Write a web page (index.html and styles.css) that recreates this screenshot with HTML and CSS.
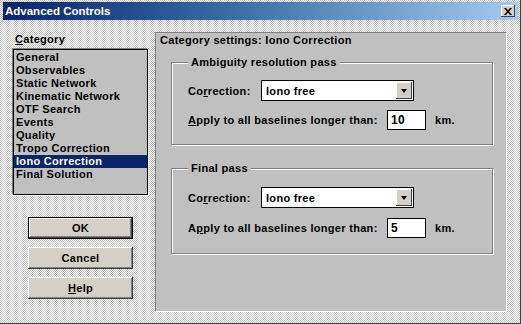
FILE: index.html
```html
<!DOCTYPE html>
<html lang="en">
<head>
  <meta charset="UTF-8" />
  <title>Advanced Controls</title>
  <link rel="stylesheet" href="styles.css">
</head>
<body>
  <div class="window">
    <div class="titlebar">
      <span class="title">Advanced Controls</span>
      <span class="close">
        <svg width="8" height="7" viewBox="0 0 8 7"><path d="M0 0h2l2 2.5L6 0h2L5 3.5 8 7H6L4 4.5 2 7H0l3-3.5z" fill="#000"/></svg>
      </span>
    </div>

    <div class="main">
      <div class="sidebar">
        <div class="cat-label"><u>C</u>ategory</div>
        <ul class="listbox">
          <li>General</li>
          <li>Observables</li>
          <li>Static Network</li>
          <li>Kinematic Network</li>
          <li>OTF Search</li>
          <li>Events</li>
          <li>Quality</li>
          <li>Tropo Correction</li>
          <li class="selected">Iono Correction</li>
          <li>Final Solution</li>
        </ul>
        <div class="buttons">
          <button class="btn default">OK</button>
          <button class="btn">Cancel</button>
          <button class="btn"><u>H</u>elp</button>
        </div>
      </div>

      <div class="panel">
        <div class="panel-title">Category settings: Iono Correction</div>

        <div class="group first">
          <span class="group-title">Ambiguity resolution pass</span>
          <div class="row">
            <span class="label short">Co<u>r</u>rection:</span>
            <div class="combo">
              <span class="combo-value">Iono free</span>
              <span class="combo-btn"><span class="arrow"></span></span>
            </div>
          </div>
          <div class="row">
            <span class="label long"><u>A</u>pply to all baselines longer than:</span>
            <div class="field">10</div>
            <span class="unit">km.</span>
          </div>
        </div>

        <div class="group second">
          <span class="group-title">Final pass</span>
          <div class="row">
            <span class="label short">Co<u>r</u>rection:</span>
            <div class="combo">
              <span class="combo-value">Iono free</span>
              <span class="combo-btn"><span class="arrow"></span></span>
            </div>
          </div>
          <div class="row">
            <span class="label long">A<u>p</u>ply to all baselines longer than:</span>
            <div class="field">5</div>
            <span class="unit">km.</span>
          </div>
        </div>
      </div>
    </div>
  </div>
</body>
</html>
```

FILE: styles.css
```css
body {
  margin: 0;
  padding: 0;
  font-family: 'Liberation Sans', Arial, sans-serif;
  font-size: 11px;
  font-weight: bold;
  letter-spacing: 0.3px;
  color: #000;
}
.window {
  width: 521px;
  height: 324px;
  box-sizing: border-box;
  background-color: #c0c0c0;
  background-image: conic-gradient(#ffffff 25%, #c0c0c0 0 50%, #ffffff 0 75%, #c0c0c0 0);
  background-size: 2px 2px;
  border-right: 1px solid #404040;
  border-bottom: 1px solid #404040;
  padding-top: 2px;
}
.titlebar {
  height: 18px;
  margin: 0 2px 0 3px;
  background: linear-gradient(90deg, #0a246a, #3a6ea5 45%, #a6caf0);
  display: flex;
  align-items: center;
  justify-content: space-between;
  padding: 0 3px 0 2px;
}
.title {
  color: #fff;
  font-size: 11.5px;
  letter-spacing: 0;
}
.close {
  width: 14px;
  height: 12px;
  background: #d4d0c8;
  display: flex;
  align-items: center;
  justify-content: center;
  box-shadow: inset -1px -1px #404040, inset 1px 1px #fff;
}
.main {
  display: flex;
  padding-left: 13px;
}
.sidebar {
  width: 135px;
  padding-top: 13px;
  margin-right: 7px;
}
.cat-label {
  line-height: 13px;
  padding-left: 2px;
}
.listbox {
  list-style: none;
  margin: 3px 0 0;
  padding: 1px 0 0;
  height: 146px;
  box-sizing: border-box;
  background: #c0c0c0;
  border: 1px solid #000;
  box-shadow: -1px -1px 0 #808080, 1px 1px 0 #fff;
}
.listbox li {
  line-height: 13px;
  height: 13px;
  padding-left: 2px;
  white-space: nowrap;
}
.listbox li.selected {
  background: #0a246a;
  color: #fff;
}
.buttons {
  margin: 22px 0 0 15px;
  display: flex;
  flex-direction: column;
  gap: 8px;
}
.btn {
  width: 105px;
  height: 22px;
  font-family: inherit;
  font-size: 11px;
  font-weight: bold;
  letter-spacing: 0.3px;
  background: #d4d0c8;
  border: none;
  padding: 0;
  box-shadow: inset -1px -1px #404040, inset 1px 1px #fff, inset -2px -2px #808080;
}
.btn.default {
  border: 1px solid #000;
}
.panel {
  margin-top: 12px;
  width: 352px;
  height: 280px;
  box-sizing: border-box;
  background: #c0c0c0;
  border: 1px solid;
  border-color: #808080 #fff #fff #808080;
  padding: 1px 0 0 15px;
}
.panel-title {
  line-height: 13px;
  margin-left: -11px;
}
.group {
  position: relative;
  width: 322px;
  box-sizing: border-box;
  border: 1px solid #808080;
  box-shadow: inset 1px 1px #fff, 1px 1px #fff;
  padding: 17px 0 0 16px;
  display: flex;
  flex-direction: column;
  gap: 9px;
}
.group.first {
  margin-top: 15px;
  height: 83px;
}
.group.second {
  margin-top: 23px;
  height: 86px;
  padding-top: 18px;
  gap: 10px;
}
.group-title {
  position: absolute;
  top: -7px;
  left: 16px;
  padding: 0 3px;
  line-height: 13px;
  background: #c0c0c0;
}
.row {
  display: flex;
  align-items: center;
}
.label.short {
  width: 73px;
}
.label.long {
  width: 199px;
}
.combo {
  width: 153px;
  height: 21px;
  box-sizing: border-box;
  background: #fff;
  border: 1px solid #000;
  display: flex;
  align-items: center;
  justify-content: space-between;
  padding: 0 1px 0 4px;
}
.combo-btn {
  width: 16px;
  height: 17px;
  background: #d4d0c8;
  box-shadow: inset -1px -1px #404040, inset 1px 1px #fff;
  display: flex;
  align-items: center;
  justify-content: center;
}
.arrow {
  width: 0;
  height: 0;
  border-left: 3px solid transparent;
  border-right: 3px solid transparent;
  border-top: 4px solid #000;
}
.field {
  width: 39px;
  height: 20px;
  box-sizing: border-box;
  background: #fff;
  border: 1px solid #000;
  padding-left: 3px;
  line-height: 18px;
  font-size: 12px;
}
.unit {
  margin-left: 9px;
}
```
